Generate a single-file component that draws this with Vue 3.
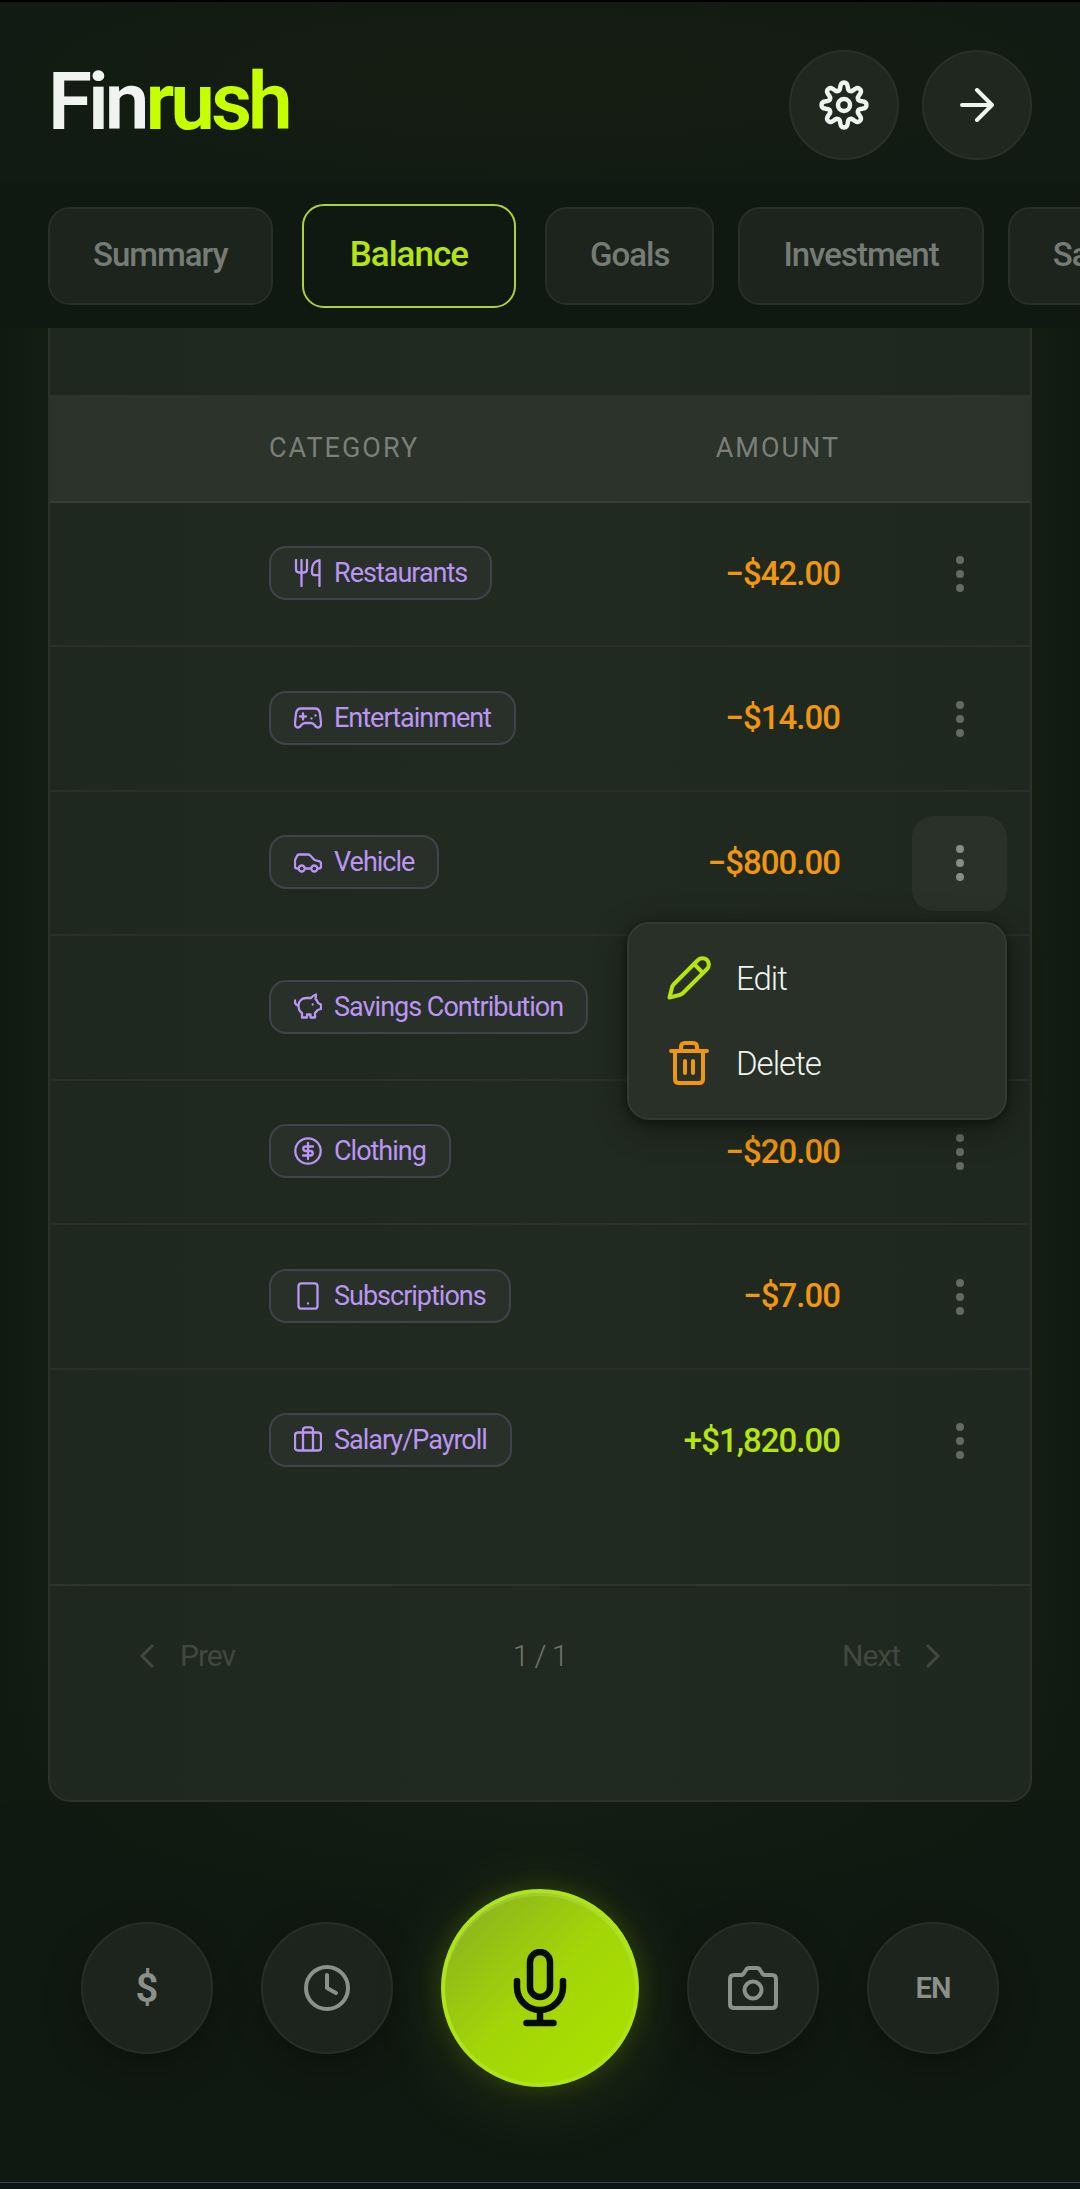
<script setup>
import { ref } from 'vue'

const tabs = ['Summary', 'Balance', 'Goals', 'Investment', 'Savings']
const activeTab = ref('Balance')
const openMenu = ref(2)

const icons = {
  restaurants: 'M2 1v9q0 3.5 3 3.5h5q3 0 3-3.5V1M7.5 1v26M25.5 27V1.2c-4 .4-7.5 4-7.5 9v3q0 3 3 3h4.5',
  entertainment:
    'M7 4.5h14c3 0 4.5 2 5 5l1 9.5c.3 3-1 4.5-3 4.5-1.5 0-2.5-1-3.5-2.5C19.5 19.5 18.5 19 17 19h-6c-1.5 0-2.5.5-3.5 2C6.5 22.5 5.5 23.5 4 23.5c-2 0-3.3-1.5-3-4.5l1-9.5c.5-3 2-5 5-5zM9 9.5v6M6 12.5h6M17.5 14.5v.1M21.5 11.5v.1',
  vehicle:
    'M4.5 20.5H3q-2 0-2-2V12l2-4q.6-1.5 2.2-1.5H14q1.2 0 2 .8l4.5 4.7 4.5 1.2q2 .6 2 2.5v2.8q0 2-2 2h-1.5M11 20.5h6M4.7 20.5a3 3 0 1 0 6 0a3 3 0 1 0-6 0M17.3 20.5a3 3 0 1 0 6 0a3 3 0 1 0-6 0',
  savings:
    'M1 7.5v1.5q0 3 3.5 3.5M4.5 13c0-5 3.5-8 8-8h4.5c1.5-2 3-3 5-3.5l-.5 4.5c1.2 1 2 2.2 2.5 4l3 1.5v4.5l-3.5 1c-.5 1-1.5 2-2.5 2.7V24.5h-4.5V21.5h-3.5v3H8v-4.5c-2.2-1.5-3.5-4-3.5-7zM18.7 11.4v.1',
  clothing:
    'M1.3 14a12.7 12.7 0 1 0 25.4 0a12.7 12.7 0 1 0-25.4 0M14 6v16M19 9.5h-7q-2.8 0-2.8 2.2T12 14h4q2.8 0 2.8 2.2T16 18.5H9',
  subscriptions: 'M7.5 1.3h13q3 0 3 3v19.4q0 3-3 3h-13q-3 0-3-3V4.3q0-3 3-3zM14 21.5v.1',
  salary: 'M4 6.5h20q3 0 3 3V21.5q0 3-3 3H4q-3 0-3-3V9.5q0-3 3-3zM9 24.5V4q0-2.7 2.7-2.7h4.6Q19 1.3 19 4V24.5',
}

const rows = [
  { label: 'Restaurants', icon: 'restaurants', amount: '−$42.00' },
  { label: 'Entertainment', icon: 'entertainment', amount: '−$14.00' },
  { label: 'Vehicle', icon: 'vehicle', amount: '−$800.00' },
  { label: 'Savings Contribution', icon: 'savings', amount: '' },
  { label: 'Clothing', icon: 'clothing', amount: '−$20.00' },
  { label: 'Subscriptions', icon: 'subscriptions', amount: '−$7.00' },
  { label: 'Salary/Payroll', icon: 'salary', amount: '+$1,820.00', income: true },
]

// Eight-lobed cog outline around (25, 25)
const cog =
  'M' +
  Array.from({ length: 160 }, (_, i) => {
    const t = (i / 160) * Math.PI * 2
    const r = 18.8 + (3.6 * Math.tanh(1.5 * Math.cos(8 * t))) / Math.tanh(1.5)
    return `${(25 + r * Math.sin(t)).toFixed(2)} ${(25 - r * Math.cos(t)).toFixed(2)}`
  }).join('L') +
  'Z'

const toggle = (i) => {
  openMenu.value = openMenu.value === i ? -1 : i
}
</script>

<template>
  <div class="app">
    <header class="top">
      <h1 class="logo">Fin<span>rush</span></h1>
      <div class="top-actions">
        <button class="round" type="button" aria-label="Settings">
          <svg width="50" height="50" viewBox="0 0 50 50" stroke-width="4.5"><path :d="cog" /><circle cx="25" cy="25" r="6" /></svg>
        </button>
        <button class="round" type="button" aria-label="Log out">
          <svg width="34" height="34" viewBox="0 0 34 34" stroke-width="4"><path d="M2 17h30M17 2l15 15-15 15" /></svg>
        </button>
      </div>
    </header>

    <nav class="tabs">
      <button
        v-for="tab in tabs"
        :key="tab"
        type="button"
        class="tab"
        :class="{ active: tab === activeTab }"
        @click="activeTab = tab"
      >{{ tab }}</button>
    </nav>

    <main class="content">
      <section class="card">
        <table class="ledger">
          <thead>
            <tr>
              <th class="category">CATEGORY</th>
              <th class="amount">AMOUNT</th>
              <th class="actions"></th>
            </tr>
          </thead>
          <tbody>
            <tr v-for="(row, i) in rows" :key="row.label">
              <td class="category">
                <span class="pill">
                  <svg width="28" height="28" viewBox="0 0 28 28" stroke-width="2.3"><path :d="icons[row.icon]" /></svg>
                  {{ row.label }}
                </span>
              </td>
              <td class="amount" :class="{ income: row.income }">{{ row.amount }}</td>
              <td class="actions">
                <div class="menu-anchor">
                  <button class="more" type="button" aria-label="Row actions" :class="{ open: openMenu === i }" @click="toggle(i)">
                    <svg width="8" height="36" viewBox="0 0 8 36"><circle cx="4" cy="4" r="4" /><circle cx="4" cy="18" r="4" /><circle cx="4" cy="32" r="4" /></svg>
                  </button>
                  <div v-if="openMenu === i" class="menu" role="menu">
                    <button type="button" role="menuitem">
                      <svg class="edit" width="44" height="44" viewBox="0 0 44 44" stroke-width="4"><path d="M2.5 41.5l2.5-10q.5-2 2-3.5L31 4a6.2 6.2 0 0 1 9 9L16 37q-1.5 1.5-3.5 2zM27 8l9 9" /></svg>
                      Edit
                    </button>
                    <button type="button" role="menuitem">
                      <svg class="delete" width="44" height="44" viewBox="0 0 44 44" stroke-width="4"><path d="M4 10h36M14 9V6q0-4 4-4h8q4 0 4 4v3M8 10v28q0 4 4 4h20q4 0 4-4V10M18 20v12M26 20v12" /></svg>
                      Delete
                    </button>
                  </div>
                </div>
              </td>
            </tr>
          </tbody>
        </table>

        <div class="pager">
          <button type="button" disabled>
            <svg width="14" height="24" viewBox="0 0 14 24" stroke-width="3"><path d="M12 2L2 12l10 10" /></svg>
            Prev
          </button>
          <span class="page">1 / 1</span>
          <button type="button" disabled>
            Next
            <svg width="14" height="24" viewBox="0 0 14 24" stroke-width="3"><path d="M2 2l10 10L2 22" /></svg>
          </button>
        </div>
      </section>
    </main>

    <footer class="dock">
      <button class="dock-btn currency" type="button">$</button>
      <button class="dock-btn" type="button" aria-label="History">
        <svg width="46" height="46" viewBox="0 0 46 46" stroke-width="4"><circle cx="23" cy="23" r="21" /><path d="M23 10v13l9 5" /></svg>
      </button>
      <button class="mic" type="button" aria-label="Record">
        <svg width="54" height="78" viewBox="0 0 54 78" stroke-width="6.5"><rect x="17" y="3" width="20" height="45" rx="10" /><path d="M4 32v6a23 23 0 0 0 46 0v-6M27 61v13M13.5 74h27" /></svg>
      </button>
      <button class="dock-btn" type="button" aria-label="Camera">
        <svg width="50" height="44" viewBox="0 0 50 44" stroke-width="4"><path d="M6 9h7q2 0 3-2l2-3q1-2 3-2h8q2 0 3 2l2 3q1 2 3 2h7q4 0 4 4v25q0 4-4 4H6q-4 0-4-4V13q0-4 4-4z" /><circle cx="25" cy="24" r="8.5" /></svg>
      </button>
      <button class="dock-btn lang" type="button">EN</button>
    </footer>
    <div class="base"></div>
  </div>
</template>

<style>
body {
  margin: 0;
  background: #101911;
}
</style>

<style scoped>
.app {
  min-height: 100vh;
  display: flex;
  flex-direction: column;
  overflow: hidden;
  box-sizing: border-box;
  border-top: 2px solid #000;
  background: #101911;
  color: #f0f4f1;
  font-family: Roboto, "Liberation Sans", sans-serif;
}
button {
  margin: 0;
  padding: 0;
  border: 0;
  background: none;
  color: inherit;
  font: inherit;
  letter-spacing: inherit;
}
svg {
  display: block;
  flex: none;
  fill: none;
  stroke: currentColor;
  stroke-linecap: round;
  stroke-linejoin: round;
}
.top {
  display: flex;
  justify-content: space-between;
  align-items: center;
  padding: 48px 48px 23px;
  background: radial-gradient(ellipse at 50% 40%, #151d12, #121b13 75%);
}
.logo {
  margin: 0;
  padding-bottom: 6px;
  font-size: 80px;
  line-height: 80px;
  font-weight: 600;
  letter-spacing: -4px;
}
.logo span {
  color: #c6ff00;
}
.top-actions {
  display: flex;
  gap: 23px;
}
.round {
  width: 110px;
  height: 110px;
  box-sizing: border-box;
  display: grid;
  place-items: center;
  border: 2px solid #283028;
  border-radius: 50%;
  background: #1f271e;
}
.tabs {
  display: flex;
  align-items: center;
  gap: 24px;
  height: 145px;
  padding-left: 48px;
  overflow: hidden;
}
.tab {
  flex: none;
  height: 98px;
  padding: 0 43px 2px;
  border: 2px solid #272f28;
  border-radius: 22px;
  box-sizing: border-box;
  background: #1c241d;
  color: #767b76;
  font-size: 33px;
  font-weight: 500;
  letter-spacing: -1px;
}
.tab.active {
  height: 104px;
  margin: 0 5px;
  padding: 0 46px 2px;
  border-color: #a9d437;
  background: none;
  color: #b4e412;
  font-size: 35px;
}
.content {
  padding: 0 48px;
  background:
    linear-gradient(transparent 88%, #111a11),
    linear-gradient(90deg, #101a11, #141d12 4%, #141d12 96%, #101a11);
}
.card {
  border: 2px solid #2a322a;
  border-top: 0;
  border-radius: 0 0 22px 22px;
  padding-top: 67px;
  background: linear-gradient(90deg, #1f281e, #212a20 50%, #1f281e);
}
.ledger {
  width: 100%;
  border-collapse: separate;
  border-spacing: 0;
}
.ledger th,
.ledger td {
  padding: 0;
  box-sizing: border-box;
}
.ledger th {
  height: 108px;
  border-bottom: 2px solid #363e35;
  background: #2b332a;
  color: #7a7f79;
  font-size: 27px;
  font-weight: 400;
  letter-spacing: 2px;
}
.ledger td {
  height: 144px;
  border-bottom: 2px solid #293029;
}
.ledger tr:nth-child(even) td {
  height: 145px;
}
.ledger tr:last-child td {
  border-bottom-color: transparent;
}
.ledger .category {
  padding-left: 219px;
  text-align: left;
}
.ledger td.category {
  padding-bottom: 2px;
}
.ledger .amount {
  text-align: right;
}
.ledger td.amount {
  padding-bottom: 2px;
  color: #f09610;
  font-size: 33px;
  font-weight: 500;
  letter-spacing: -1px;
}
.ledger td.amount.income {
  color: #b4e412;
}
.ledger .actions {
  width: 190px;
  padding-right: 23px;
}
.pill {
  display: inline-flex;
  align-items: center;
  gap: 12px;
  height: 50px;
  padding: 0 23px;
  border: 2px solid #40434b;
  border-radius: 17px;
  background: #283029;
  color: #ba96f2;
  font-size: 27px;
  letter-spacing: -1px;
  white-space: nowrap;
  vertical-align: top;
}
.menu-anchor {
  position: relative;
  display: flex;
  justify-content: flex-end;
}
.more {
  width: 95px;
  height: 95px;
  display: grid;
  place-items: center;
  border-radius: 22px;
  color: #656b64;
}
.more svg {
  fill: currentColor;
  stroke: none;
}
.more.open {
  background: #2a3128;
  color: #898d88;
}
.menu {
  position: absolute;
  z-index: 1;
  top: 106px;
  right: 0;
  width: 380px;
  box-sizing: border-box;
  padding: 12px 0;
  border: 2px solid #323a33;
  border-radius: 22px;
  background: #283028;
  box-shadow: 0 8px 32px rgba(0, 0, 0, 0.4), 0 2px 8px rgba(0, 0, 0, 0.4);
}
.menu button {
  display: flex;
  align-items: center;
  gap: 25px;
  width: 100%;
  height: 85px;
  padding-left: 38px;
  font-size: 33px;
  font-weight: 300;
  letter-spacing: -1px;
}
.edit {
  color: #b4e412;
}
.delete {
  color: #f09610;
}
.pager {
  display: grid;
  grid-template-columns: 1fr auto 1fr;
  align-items: center;
  margin-top: 70px;
  padding: 52px 90px 126px;
  border-top: 2px solid #2d352c;
  color: #41483f;
  font-size: 30px;
  line-height: 36px;
  letter-spacing: -1px;
}
.pager button {
  display: flex;
  align-items: center;
  gap: 26px;
}
.pager button:last-child {
  justify-self: end;
}
.page {
  color: #6f756d;
  font-weight: 300;
}
.dock {
  display: flex;
  justify-content: center;
  align-items: center;
  gap: 48px;
  padding: 87px 0 95px;
  background: radial-gradient(ellipse 50% 30% at 50% 0, #141d12, #101911);
}
.dock-btn {
  width: 132px;
  height: 132px;
  box-sizing: border-box;
  display: grid;
  place-items: center;
  border: 2px solid #272e28;
  border-radius: 50%;
  background: #1c241d;
  color: #8b908a;
  font-weight: 600;
  box-shadow: 0 12px 36px rgba(0, 0, 0, 0.3);
}
.currency {
  font-size: 40px;
}
.lang {
  font-size: 29px;
  letter-spacing: -1px;
}
.mic {
  width: 198px;
  height: 198px;
  box-sizing: border-box;
  display: grid;
  place-items: center;
  border: 4px solid #aee51a;
  border-radius: 50%;
  background: linear-gradient(135deg, #8cb51d 10%, #a3d508 50%, #aae000 90%);
  color: #060c02;
  box-shadow: 0 0 24px rgba(160, 210, 0, 0.2), 0 8px 80px rgba(160, 210, 0, 0.12), inset 0 3px 0 rgba(255, 255, 255, 0.15);
}
.base {
  flex: 1;
  min-height: 6px;
  border-top: 1px solid #3a4545;
  background: #0b1416;
}
</style>
